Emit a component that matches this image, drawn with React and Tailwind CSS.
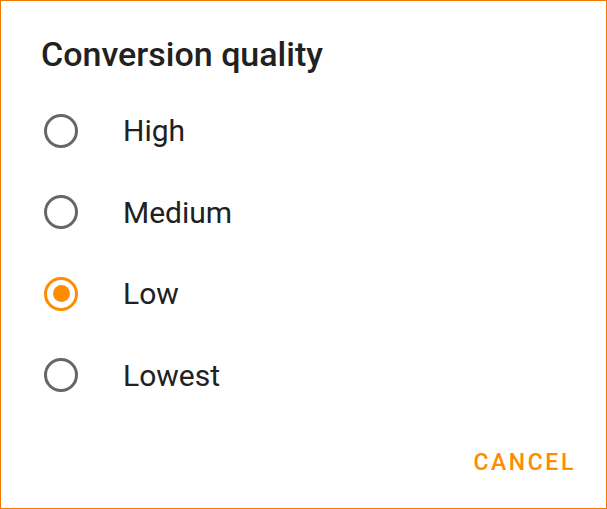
import React, { useState } from 'react';

const options = ['High', 'Medium', 'Low', 'Lowest'];

const Radio = ({ checked }) => (
  <span
    className={`flex items-center justify-center w-[34px] h-[34px] rounded-full border-[3px] ${
      checked ? 'border-[#ff8c00]' : 'border-[#666666]'
    }`}
  >
    {checked && <span className="w-[17px] h-[17px] rounded-full bg-[#ff8c00]"></span>}
  </span>
);

const App = () => {
  const [selected, setSelected] = useState('Low');

  return (
    <div className="w-[607px] h-[509px] bg-white border border-[#f07800] font-['Roboto',sans-serif] flex flex-col">
      <h1 className="pl-[40px] pt-[32px] text-[34px] font-medium text-[#212121] leading-[42px]">
        Conversion quality
      </h1>

      {/* Options */}
      <div className="mt-[15px] flex flex-col">
        {options.map((opt) => (
          <button
            key={opt}
            onClick={() => setSelected(opt)}
            className="flex items-center h-[81.5px] pl-[43px] text-left"
          >
            <Radio checked={selected === opt} />
            <span className="ml-[45px] text-[30px] text-[#212121]">{opt}</span>
          </button>
        ))}
      </div>

      <div className="flex justify-end pr-[30px] mt-[30px]">
        <button className="text-[23px] font-medium tracking-[2.6px] text-[#ff8c00]">CANCEL</button>
      </div>
    </div>
  );
};

export default App;
